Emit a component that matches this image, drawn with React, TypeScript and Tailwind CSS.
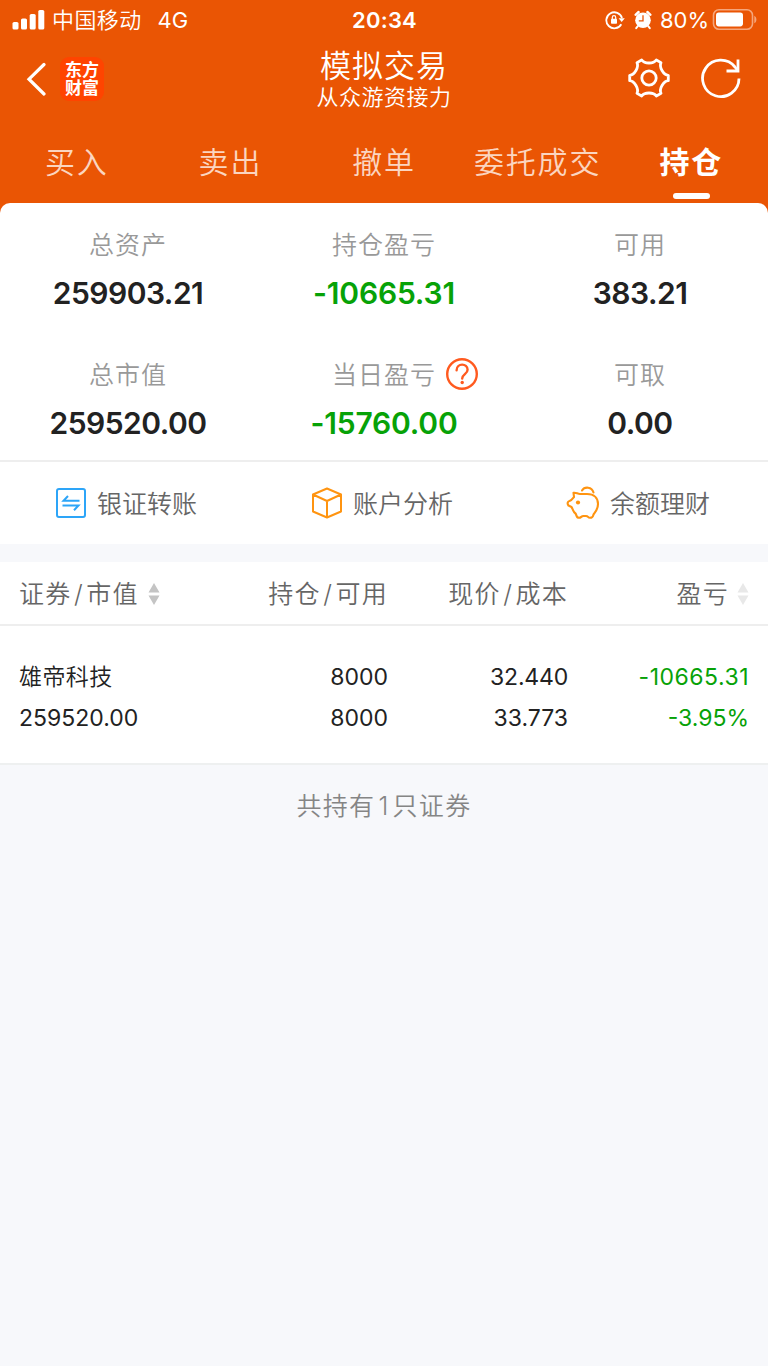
import React from "react";

type Stat = {
  label: string;
  value: string;
  green?: boolean;
  help?: boolean;
};

const TABS = ["买入", "卖出", "撤单", "委托成交", "持仓"];
const ACTIVE_TAB = "持仓";

const STATS: Stat[] = [
  { label: "总资产", value: "259903.21" },
  { label: "持仓盈亏", value: "-10665.31", green: true },
  { label: "可用", value: "383.21" },
  { label: "总市值", value: "259520.00" },
  { label: "当日盈亏", value: "-15760.00", green: true, help: true },
  { label: "可取", value: "0.00" },
];

const StatusBar = () => (
  <div className="flex h-10 items-center pr-[11px] pl-[12px] text-white">
    <div className="flex flex-1 items-center">
      <svg width="33" height="20" viewBox="0 0 33 20" fill="#fff">
        <rect x="0.5" y="12" width="6" height="7.5" rx="1.6" />
        <rect x="9" y="8.5" width="6" height="11" rx="1.6" />
        <rect x="17.7" y="4" width="6" height="15.5" rx="1.6" />
        <rect x="26.3" y="0" width="6" height="19.5" rx="1.6" />
      </svg>
      <span className="ml-[7px] text-[22px] leading-10 font-[350] tracking-[0.4px]">中国移动</span>
      <span className="ml-4 text-[22px] leading-10">4G</span>
    </div>
    <span className="text-[22px] leading-10 font-semibold tracking-[0.2px]">20:34</span>
    <div className="flex flex-1 items-center justify-end">
      {/* Rotation lock */}
      <svg width="20" height="20" viewBox="0 0 20 20" fill="none" stroke="#fff" strokeWidth="1.8">
        <path d="M16.3 14.2A8 8 0 1 1 17 8" />
        <path d="M13.6 8.2h6.2L16.7 12z" fill="#fff" stroke="none" />
        <rect x="6" y="8.8" width="6" height="5" rx="0.8" fill="#fff" stroke="none" />
        <path d="M7.3 9V7.4a1.7 1.7 0 0 1 3.4 0V9" strokeWidth="1.2" />
      </svg>
      {/* Alarm clock */}
      <svg className="ml-[9px]" width="18" height="20" viewBox="0 0 18 20">
        <circle cx="9" cy="10.3" r="7.8" fill="#fff" />
        <path d="M1.6 4.8 4.6 2M16.4 4.8 13.400 2" stroke="#fff" strokeWidth="2.4" strokeLinecap="round" />
        <path d="m3.8 16.2-1.600 2M14.2 16.2l1.600 2" stroke="#fff" strokeWidth="2" strokeLinecap="round" />
        <path d="M9 5.2v5.6H4.8" stroke="#ea5504" strokeWidth="1.3" fill="none" />
      </svg>
      <span className="ml-[8px] text-[22px] leading-10">80%</span>
      <svg className="ml-[3px]" width="45" height="22" viewBox="0 0 45 22">
        <rect x="1.500" y="0.800" width="39" height="19.500" rx="5.5" fill="none" stroke="#f5a67c" strokeWidth="1.6" />
        <rect x="4" y="3.600" width="27" height="13.800" rx="2.8" fill="#fff" />
        <path d="M42.300 6.700c2.8 1.3 2.8 6.3 0 7.6z" fill="#f5a67c" />
      </svg>
    </div>
  </div>
);

const NavBar = () => (
  <div className="flex h-[78px] items-center pr-[26px] pl-[26px] text-white">
    <div className="-mt-px flex flex-1 items-center">
      <svg width="20" height="34" viewBox="0 0 20 34" fill="none" stroke="#fff" strokeWidth="3.2">
        <path d="M18 2.500 3 17.2 18 32" strokeLinecap="round" />
      </svg>
      <div className="ml-[14px] flex h-11 w-11 flex-col items-center justify-center rounded-[9px] bg-[#ff4400] text-[17px] leading-[18px] font-bold">
        <span>东方</span>
        <span>财富</span>
      </div>
    </div>
    <div className="flex flex-col items-center pt-px font-[350]">
      <span className="text-[31px] leading-9 tracking-[1px]">模拟交易</span>
      <span className="text-[22px] leading-[27px] tracking-[0.5px]">从众游资接力</span>
    </div>
    <div className="-mt-[2px] flex flex-1 items-center justify-end gap-[29px]">
      <svg width="44" height="44" viewBox="0 0 44 44" fill="none" stroke="#fff" strokeWidth="2.8" strokeLinejoin="round">
        <path d="M14.7 3.95C17.5 8 26.5 8 29.3 3.95L34 6.65C31.9 11.1 36.4 18.9 41.3 19.3V24.7C36.4 25.1 31.9 32.9 34 37.35L29.3 40.05C26.5 36 17.5 36 14.7 40.05L10 37.35C12.100 32.9 7.6 25.1 2.7 24.7V19.3C7.6 18.9 12.100 11.1 10 6.65Z" />
        <circle cx="22" cy="22" r="7.2" />
      </svg>
      <svg width="42" height="42" viewBox="0 0 42 42" fill="none" stroke="#fff" strokeWidth="2.8">
        <path d="M39 21.5A18.2 18.2 0 1 1 35 10L38 14" />
        <path d="M38 2.5V14H26.5" />
      </svg>
    </div>
  </div>
);

const HelpIcon = () => (
  <svg width="34" height="34" viewBox="0 0 34 34" fill="none" stroke="#ff5a1f" strokeWidth="2.4">
    <circle cx="17" cy="17" r="14.8" />
    <path d="M11.6 13.2c0-7.400 11-7.400 11-.4 0 4.200-5.400 4.500-5.400 8.700" strokeLinecap="round" />
    <circle cx="17.2" cy="25.5" r="1.7" fill="#ff5a1f" stroke="none" />
  </svg>
);

const TransferIcon = () => (
  <svg width="32" height="32" viewBox="0 0 32 32" fill="none" stroke="#2da5f8" strokeWidth="2">
    <rect x="2" y="2" width="28" height="28" rx="2" />
    <path d="M24.5 13.8H8.5L13 9M7.5 18.5H23.5L19 23.3" />
  </svg>
);

const CubeIcon = () => (
  <svg width="32" height="32" viewBox="0 0 32 32" fill="none" stroke="#ff9410" strokeWidth="2" strokeLinejoin="round">
    <path d="M16 1.5 30 7.5V24.5L16 30.5 2 24.5V7.5ZM2 7.5 16 14 30 7.5M16 14V30.5" />
  </svg>
);

const PiggyIcon = () => (
  <svg width="34" height="34" viewBox="0 0 34 34" fill="none" stroke="#ff9410" strokeWidth="2.1" strokeLinejoin="round" strokeLinecap="round">
    <path d="M7.500 6.800C10 6.200 11.500 8 14 8H21C28.500 8 32 12.500 32 18C32 24 28.500 26.500 27.500 28.500C27 31 26.500 31.800 24 31.800C21.500 31.800 22.500 30 20 30H17.500C15 30 15.500 31.800 13 31.800C10 31.800 11 29.500 9.500 27.500C7 26 7 23 5.500 21L2.500 19.500C1 17.500 1.500 15.500 3.500 15C5.500 14.500 6.500 13 8 11Z" />
    <path d="M16 4.500C18.500 .3 26 .5 27.500 6.500" />
    <circle cx="12" cy="16.5" r="2.100" fill="#ff9410" stroke="none" />
  </svg>
);

const SHORTCUTS = [
  { label: "银证转账", icon: <TransferIcon /> },
  { label: "账户分析", icon: <CubeIcon /> },
  { label: "余额理财", icon: <PiggyIcon /> },
];

const SortIcon = ({ color }: { color: string }) => (
  <svg width="12" height="24" viewBox="0 0 12 24" fill={color}>
    <path d="M6 1 11.5 10.5H.5ZM6 23 .5 13.5H11.5Z" />
  </svg>
);

// Two words separated by a slash, used in the table head
const Pair = ({ left, right }: { left: string; right: string }) => (
  <span>
    {left}
    <span className="mx-[2.5px]">/</span>
    {right}
  </span>
);

const App: React.FC = () => {
  return (
    <div className="flex min-h-[1366px] w-[768px] flex-col bg-[#f7f8fb] font-['Inter','Noto_Sans_CJK_SC',sans-serif]">
      {/* Orange header */}
      <header className="bg-[#ea5504]">
        <StatusBar />
        <NavBar />
        <nav className="grid h-[85px] grid-cols-5">
          {TABS.map((tab) => (
            <div key={tab} className="flex flex-col items-center pt-[23px]">
              <span
                className={`text-[30px] leading-[42px] tracking-[1.8px] ${
                  tab === ACTIVE_TAB ? "font-bold text-white" : "font-[350] text-[#fbd5c0]"
                }`}
              >
                {tab}
              </span>
              {tab === ACTIVE_TAB && <div className="mt-[10px] h-[6px] w-[37px] rounded-full bg-white" />}
            </div>
          ))}
        </nav>
      </header>

      {/* Account summary */}
      <div className="bg-[#ea5504]">
        <section className="grid h-[259px] grid-cols-3 grid-rows-[130px_129px] rounded-t-[10px] border-b-2 border-[#eeeeee] bg-white">
          {STATS.map((stat) => (
            <div key={stat.label} className="flex flex-col items-center pt-[24px]">
              <div className="relative text-[25px] leading-9 font-[350] tracking-[1px] text-[#999999]">
                {stat.label}
                {stat.help && (
                  <span className="absolute top-0 left-[113px]">
                    <HelpIcon />
                  </span>
                )}
              </div>
              <div
                className={`mt-[12px] text-[30px] leading-9 font-semibold ${
                  stat.green ? "tracking-[-0.2px] text-[#07a207]" : "tracking-[-0.5px] text-[#222222]"
                }`}
              >
                {stat.value}
              </div>
            </div>
          ))}
        </section>
      </div>

      {/* Shortcuts */}
      <section className="grid h-[82px] grid-cols-3 bg-white text-[25px] font-[350] text-[#666666]">
        {SHORTCUTS.map(({ label, icon }) => (
          <div key={label} className="flex items-center justify-center gap-[10px] pr-1">
            {icon}
            <span className="pt-[4px]">{label}</span>
          </div>
        ))}
      </section>

      {/* Holdings table */}
      <section className="mt-[18px] bg-white">
        <div className="grid h-[64px] grid-cols-[200px_169px_180px_181px] items-center border-b-2 border-[#eeeeee] px-[19px] pt-[4px] text-[25px] font-[350] tracking-[1.2px] text-[#666666]">
          <div className="flex items-center gap-[9px]">
            <Pair left="证券" right="市值" />
            <span className="-mt-[3px]">
              <SortIcon color="#c4c4c4" />
            </span>
          </div>
          <div className="text-right">
            <Pair left="持仓" right="可用" />
          </div>
          <div className="text-right">
            <Pair left="现价" right="成本" />
          </div>
          <div className="flex items-center justify-end gap-[8px]">
            盈亏
            <span className="-mt-[3px]">
              <SortIcon color="#e8e8e8" />
            </span>
          </div>
        </div>
        <div className="grid h-[139px] grid-cols-[200px_169px_180px_181px] content-start border-b-2 border-[#eef0f0] px-[19px] pt-[31px] text-[23px] leading-[41px] text-[#222222]">
          <div className="font-[350] tracking-[0.4px]">雄帝科技</div>
          <div className="text-right">8000</div>
          <div className="text-right tracking-[-0.2px]">32.440</div>
          <div className="text-right tracking-[0.5px] text-[#07a207]">-10665.31</div>
          <div>259520.00</div>
          <div className="text-right">8000</div>
          <div className="text-right">33.773</div>
          <div className="text-right text-[#07a207]">-3.95%</div>
        </div>
      </section>

      <p className="mt-[21px] text-center text-[25px] leading-10 font-[350] tracking-[1.3px] text-[#858585]">
        共持有<span className="mx-[3px]">1</span>只证券
      </p>
    </div>
  );
};

export default App;
